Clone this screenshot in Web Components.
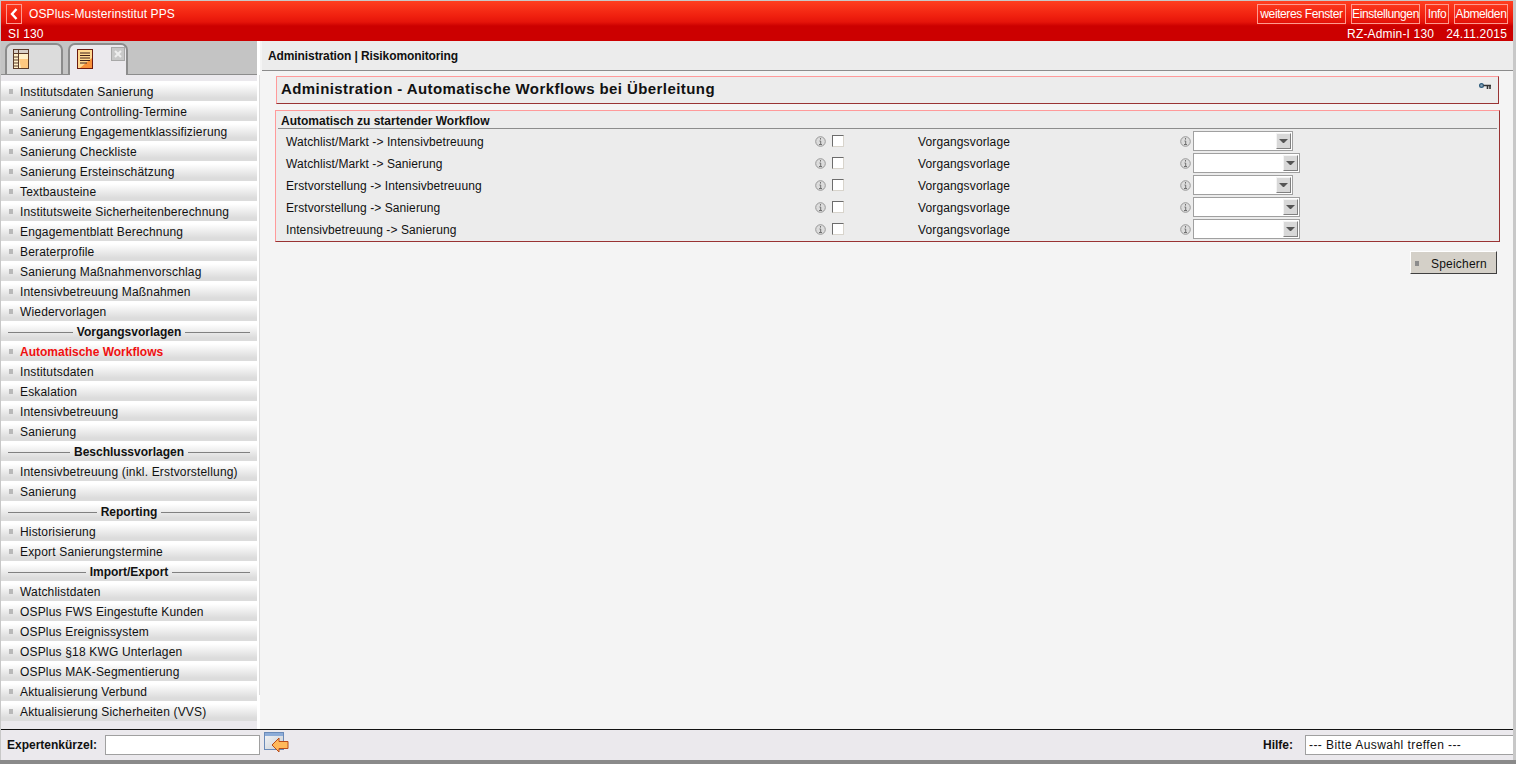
<!DOCTYPE html>
<html lang="de">
<head>
<meta charset="utf-8">
<title>OSPlus</title>
<style>
    html, body { margin: 0; height: 100%; overflow: hidden; background: #c8c8c8; }
    body { font: 12px "Liberation Sans", Arial, sans-serif; letter-spacing: 0.17px; color: #111; }
</style>
</head>
<body>
<os-app>
    <os-header slot="header"></os-header>
    <os-sidebar slot="sidebar">
        <os-nav-item>Institutsdaten Sanierung</os-nav-item>
        <os-nav-item>Sanierung Controlling-Termine</os-nav-item>
        <os-nav-item>Sanierung Engagementklassifizierung</os-nav-item>
        <os-nav-item>Sanierung Checkliste</os-nav-item>
        <os-nav-item>Sanierung Ersteinschätzung</os-nav-item>
        <os-nav-item>Textbausteine</os-nav-item>
        <os-nav-item>Institutsweite Sicherheitenberechnung</os-nav-item>
        <os-nav-item>Engagementblatt Berechnung</os-nav-item>
        <os-nav-item>Beraterprofile</os-nav-item>
        <os-nav-item>Sanierung Maßnahmenvorschlag</os-nav-item>
        <os-nav-item>Intensivbetreuung Maßnahmen</os-nav-item>
        <os-nav-item>Wiedervorlagen</os-nav-item>
        <os-nav-heading>Vorgangsvorlagen</os-nav-heading>
        <os-nav-item active>Automatische Workflows</os-nav-item>
        <os-nav-item>Institutsdaten</os-nav-item>
        <os-nav-item>Eskalation</os-nav-item>
        <os-nav-item>Intensivbetreuung</os-nav-item>
        <os-nav-item>Sanierung</os-nav-item>
        <os-nav-heading>Beschlussvorlagen</os-nav-heading>
        <os-nav-item>Intensivbetreuung (inkl. Erstvorstellung)</os-nav-item>
        <os-nav-item>Sanierung</os-nav-item>
        <os-nav-heading>Reporting</os-nav-heading>
        <os-nav-item>Historisierung</os-nav-item>
        <os-nav-item>Export Sanierungstermine</os-nav-item>
        <os-nav-heading>Import/Export</os-nav-heading>
        <os-nav-item>Watchlistdaten</os-nav-item>
        <os-nav-item>OSPlus FWS Eingestufte Kunden</os-nav-item>
        <os-nav-item>OSPlus Ereignissystem</os-nav-item>
        <os-nav-item>OSPlus §18 KWG Unterlagen</os-nav-item>
        <os-nav-item>OSPlus MAK-Segmentierung</os-nav-item>
        <os-nav-item>Aktualisierung Verbund</os-nav-item>
        <os-nav-item>Aktualisierung Sicherheiten (VVS)</os-nav-item>
    </os-sidebar>
    <os-main slot="main">
        <os-workflow-row label="Watchlist/Markt -> Intensivbetreuung"></os-workflow-row>
        <os-workflow-row label="Watchlist/Markt -> Sanierung" wide></os-workflow-row>
        <os-workflow-row label="Erstvorstellung -> Intensivbetreuung"></os-workflow-row>
        <os-workflow-row label="Erstvorstellung -> Sanierung" wide></os-workflow-row>
        <os-workflow-row label="Intensivbetreuung -> Sanierung" wide></os-workflow-row>
    </os-main>
    <os-footer slot="footer"></os-footer>
</os-app>

<script>
class OsApp extends HTMLElement {
    constructor() {
        super();
        this.attachShadow({ mode: 'open' });
        this.shadowRoot.innerHTML = `
            <style>
                :host {
                    display: grid;
                    grid-template-columns: 261px 1fr;
                    grid-template-rows: 40px 1fr 31px;
                    box-sizing: border-box;
                    height: 764px;
                    padding: 1px 3px 4px 1px;
                    background: #c8c8c8;
                    box-shadow: inset 0 -4px 0 #8a8a8a;
                }
                .header, .footer { grid-column: 1 / 3; }
            </style>
            <div class="header"><slot name="header"></slot></div>
            <slot name="sidebar"></slot>
            <slot name="main"></slot>
            <div class="footer"><slot name="footer"></slot></div>
        `;
    }
}

class OsHeader extends HTMLElement {
    constructor() {
        super();
        this.attachShadow({ mode: 'open' });
        this.shadowRoot.innerHTML = `
            <style>
                :host { display: block; color: #fff; height: 40px; }
                .top {
                    display: flex;
                    align-items: center;
                    height: 25px;
                    padding: 1px 5px 0 5px;
                    box-sizing: border-box;
                    background: linear-gradient(#ff3f20, #f0200f 60%, #e5140a 84%, #cc0000);
                }
                .back {
                    box-sizing: border-box;
                    display: flex;
                    align-items: center;
                    justify-content: center;
                    width: 16px;
                    height: 20px;
                    margin-right: 7px;
                    border: 1px solid #ff9a8f;
                }
                .title { flex: 1; letter-spacing: 0.1px; }
                button {
                    box-sizing: border-box;
                    font: inherit;
                    letter-spacing: -0.4px;
                    color: #fff;
                    background: transparent;
                    border: 1px solid #ff9a8f;
                    height: 20px;
                    padding: 0;
                    margin-left: 5px;
                }
                .bottom {
                    display: flex;
                    justify-content: space-between;
                    align-items: center;
                    height: 15px;
                    padding: 0 6px 0 7px;
                    background: #cc0000;
                }
                .date { margin-left: 12px; }
            </style>
            <div class="top">
                <span class="back">
                    <svg width="8" height="12" viewBox="0 0 8 12"><path d="M6.5 1 L2 6 L6.5 11" fill="none" stroke="#fff" stroke-width="2.4"/></svg>
                </span>
                <span class="title">OSPlus-Musterinstitut PPS</span>
                <button style="width:89px">weiteres Fenster</button>
                <button style="width:69px">Einstellungen</button>
                <button style="width:24px">Info</button>
                <button style="width:54px">Abmelden</button>
            </div>
            <div class="bottom">
                <span>SI 130</span>
                <span>RZ-Admin-I 130<span class="date">24.11.2015</span></span>
            </div>
        `;
    }
}

class OsSidebar extends HTMLElement {
    constructor() {
        super();
        this.attachShadow({ mode: 'open' });
        this.shadowRoot.innerHTML = `
            <style>
                :host {
                    display: block;
                    background:
                        linear-gradient(#dcdcdc, #dcdcdc) 258px 34px / 1px 620px no-repeat,
                        linear-gradient(90deg, #ebe9ed 256px, #fff 256px, #fff 259px, #f4f4f4 259px);
                    min-height: 0;
                    overflow: hidden;
                }
                .tabs {
                    display: flex;
                    align-items: flex-end;
                    gap: 5px;
                    box-sizing: border-box;
                    width: 256px;
                    height: 34px;
                    padding-left: 4px;
                    background: #c4c4c4;
                    border-bottom: 1px solid #8c8c8c;
                }
                .tab {
                    box-sizing: border-box;
                    position: relative;
                    height: 32px;
                    margin-bottom: -1px;
                    padding: 4px 0 0 6px;
                    border: 2px solid #8c8c8c;
                    border-bottom: 0;
                    border-radius: 7px 7px 0 0;
                    background: #dcdcdc;
                }
                .one { width: 58px; border-bottom: 1px solid #8c8c8c; }
                .two { width: 60px; padding-left: 7px; background: #ebe9ed; }
                .close {
                    position: absolute;
                    top: 2px;
                    right: 1px;
                    box-sizing: border-box;
                    width: 14px;
                    height: 14px;
                    background: #c8c8c8;
                    border: 1px solid #a8a8a8;
                }
                .list { width: 256px; padding-top: 6px; }
            </style>
            <div class="tabs">
                <div class="tab one">
                    <svg width="16" height="20" viewBox="0 0 16 20">
                        <rect x="0.5" y="0.5" width="15" height="19" fill="#fff0c8" stroke="#5b3a28"/>
                        <path d="M1 1h14v3H1z" fill="#d8d0c8"/>
                        <path d="M6 10h9v9H8z" fill="#ffc880"/>
                        <path d="M5.5 1v18M1 4.5h14M1 8h4.5M1 11h4.5M1 14h4.5M1 17h4.5" stroke="#5b3a28" fill="none"/>
                    </svg>
                </div>
                <div class="tab two">
                    <svg width="16" height="20" viewBox="0 0 16 20">
                        <rect x="0.5" y="0.5" width="15" height="19" fill="#ffd890" stroke="#6b1a10"/>
                        <path d="M15 9v10H3z" fill="#f89038"/>
                        <path d="M3 4h10M3 6.5h10M3 9h10M3 11.5h10M3 14h7" stroke="#402018" fill="none"/>
                    </svg>
                    <span class="close">
                        <svg width="12" height="12" viewBox="0 0 12 12" style="display:block"><path d="M3 3l6 6M9 3l-6 6" stroke="#eee" stroke-width="2"/></svg>
                    </span>
                </div>
            </div>
            <div class="list"><slot></slot></div>
        `;
    }
}

class OsNavItem extends HTMLElement {
    constructor() {
        super();
        this.attachShadow({ mode: 'open' });
        this.shadowRoot.innerHTML = `
            <style>
                :host {
                    display: flex;
                    align-items: center;
                    box-sizing: border-box;
                    height: 20px;
                    padding: 1px 0 0 8px;
                    background: linear-gradient(#fff 0, #fff 3px, #dcdcdc 17px);
                    white-space: nowrap;
                }
                :host([active]) { color: #f01010; font-weight: bold; letter-spacing: 0; }
                i { width: 4px; height: 5px; margin-right: 7px; background: #b8b8b8; }
            </style>
            <i></i><slot></slot>
        `;
    }
}

class OsNavHeading extends HTMLElement {
    constructor() {
        super();
        this.attachShadow({ mode: 'open' });
        this.shadowRoot.innerHTML = `
            <style>
                :host {
                    display: flex;
                    align-items: center;
                    gap: 4px;
                    box-sizing: border-box;
                    height: 20px;
                    padding: 2px 7px 0;
                    font-weight: bold;
                    letter-spacing: 0;
                    background: linear-gradient(#fff 0, #fff 3px, #dcdcdc 17px);
                    white-space: nowrap;
                }
                i { flex: 1; height: 1px; background: #808080; }
            </style>
            <i></i><slot></slot><i></i>
        `;
    }
}

class OsInfo extends HTMLElement {
    constructor() {
        super();
        this.attachShadow({ mode: 'open' });
        this.shadowRoot.innerHTML = `
            <style>:host { display: inline-block; width: 11px; height: 11px; } svg { display: block; }</style>
            <svg width="11" height="11" viewBox="0 0 11 11">
                <circle cx="5.5" cy="5.5" r="4.8" fill="#dcdcdc" stroke="#989898"/>
                <path d="M5.5 2v1.6M4.5 5h1.2v3.4M4 8.5h3" stroke="#707070" fill="none"/>
            </svg>
        `;
    }
}

class OsSelect extends HTMLElement {
    constructor() {
        super();
        this.attachShadow({ mode: 'open' });
        this.shadowRoot.innerHTML = `
            <style>
                :host {
                    display: flex;
                    justify-content: flex-end;
                    align-items: center;
                    box-sizing: border-box;
                    width: 100px;
                    height: 20px;
                    padding-right: 1px;
                    background: #fff;
                    border: 1px solid #a0a0a0;
                }
                :host([wide]) { width: 107px; }
                .arrow {
                    box-sizing: border-box;
                    display: flex;
                    align-items: center;
                    justify-content: center;
                    width: 15px;
                    height: 16px;
                    background: #d8d8d8;
                    border: 1px solid;
                    border-color: #f4f4f4 #808080 #808080 #f4f4f4;
                }
            </style>
            <span class="arrow">
                <svg width="9" height="6" viewBox="0 0 9 6"><path d="M0 1h9L5 5H4z" fill="#555"/></svg>
            </span>
        `;
    }
}

class OsWorkflowRow extends HTMLElement {
    constructor() {
        super();
        this.attachShadow({ mode: 'open' });
        this.shadowRoot.innerHTML = `
            <style>
                :host {
                    display: grid;
                    grid-template-columns: 529px 17px 86px 262px 13px auto;
                    align-items: center;
                    height: 22px;
                    letter-spacing: 0.13px;
                    white-space: nowrap;
                }
                .text { padding-top: 1px; }
                .label { letter-spacing: 0.09px; }
                .check {
                    box-sizing: border-box;
                    width: 12px;
                    height: 12px;
                    background: #fff;
                    border: 1px solid;
                    border-color: #6c6c6c #d8d4cc #d8d4cc #6c6c6c;
                }
            </style>
            <span class="text label"></span>
            <os-info></os-info>
            <span class="check"></span>
            <span class="text">Vorgangsvorlage</span>
            <os-info></os-info>
            <os-select></os-select>
        `;
        this.shadowRoot.querySelector('.label').textContent = this.getAttribute('label');
        if (this.hasAttribute('wide')) {
            this.shadowRoot.querySelector('os-select').setAttribute('wide', '');
        }
    }
}

class OsMain extends HTMLElement {
    constructor() {
        super();
        this.attachShadow({ mode: 'open' });
        this.shadowRoot.innerHTML = `
            <style>
                :host { display: block; background: #f4f4f4; min-height: 0; }
                .crumb {
                    box-sizing: border-box;
                    height: 30px;
                    padding: 8px 0 0 6px;
                    font-weight: bold;
                    letter-spacing: -0.1px;
                    background: #ececec;
                    border-bottom: 1px solid #8c8c8c;
                }
                .content { padding: 5px 14px 0 14px; }
                .title {
                    display: flex;
                    justify-content: space-between;
                    box-sizing: border-box;
                    height: 28px;
                    padding: 3px 7px 0 4px;
                    font-size: 15px;
                    font-weight: bold;
                    letter-spacing: 0.42px;
                    background: #ececec;
                    border: 1px solid;
                    border-color: #ff9a9a #993333 #993333 #ff9a9a;
                }
                .title svg { margin-top: 3px; }
                .section {
                    margin: 6px -1px 0 -1px;
                    box-sizing: border-box;
                    height: 132px;
                    background: #ececec;
                    border: 1px solid;
                    border-color: #ff9a9a #993333 #993333 #ff9a9a;
                }
                .section-title {
                    height: 18px;
                    margin: 0 2px 0 2px;
                    padding: 3px 0 0 3px;
                    box-sizing: border-box;
                    font-weight: bold;
                    letter-spacing: 0;
                    border-bottom: 1px solid #8c8c8c;
                }
                .rows { padding: 1px 0 0 10px; }
                .actions { display: flex; justify-content: flex-end; padding: 9px 2px 0 0; }
                button {
                    display: flex;
                    align-items: center;
                    box-sizing: border-box;
                    width: 87px;
                    height: 23px;
                    padding: 2px 0 0 4px;
                    font: inherit;
                    letter-spacing: 0.2px;
                    color: #111;
                    background: #d4d0c8;
                    border: 1px solid;
                    border-color: #fff #404040 #404040 #fff;
                }
                button i { width: 4px; height: 5px; margin-right: 12px; background: #8c8c8c; }
            </style>
            <div class="crumb">Administration | Risikomonitoring</div>
            <div class="content">
                <div class="title">
                    <span>Administration - Automatische Workflows bei Überleitung</span>
                    <svg width="12" height="7" viewBox="0 0 12 7">
                        <circle cx="2.5" cy="2.5" r="1.9" fill="#8aa4b8" stroke="#2c5a7a" stroke-width="1.2"/>
                        <path d="M4.5 2.5H12M8.5 2.5V6M11 2.5V6" stroke="#333" stroke-width="1.6" fill="none"/>
                    </svg>
                </div>
                <div class="section">
                    <div class="section-title">Automatisch zu startender Workflow</div>
                    <div class="rows"><slot></slot></div>
                </div>
                <div class="actions"><button><i></i>Speichern</button></div>
            </div>
        `;
    }
}

class OsFooter extends HTMLElement {
    constructor() {
        super();
        this.attachShadow({ mode: 'open' });
        this.shadowRoot.innerHTML = `
            <style>
                :host {
                    display: flex;
                    align-items: center;
                    box-sizing: border-box;
                    height: 31px;
                    padding: 0 0 0 6px;
                    background: #ebe9ed;
                    border-top: 1px solid #111;
                }
                b { letter-spacing: 0; }
                .field {
                    box-sizing: border-box;
                    height: 20px;
                    margin-left: 8px;
                    background: #fff;
                    border: 1px solid #a0a0a0;
                }
                .code { width: 155px; }
                .go { align-self: flex-start; margin: 2px 0 0 4px; }
                .spacer { flex: 1; }
                .help {
                    width: 208px;
                    margin-left: 12px;
                    padding: 2px 0 0 3px;
                    letter-spacing: 0.43px;
                    border-right: 0;
                }
            </style>
            <b>Expertenkürzel:</b>
            <span class="field code"></span>
            <svg class="go" width="25" height="21" viewBox="0 0 25 21">
                <defs>
                    <linearGradient id="win" x1="0" y1="0" x2="1" y2="1">
                        <stop offset="0" stop-color="#f4f6fa"/>
                        <stop offset="1" stop-color="#c8ccd0"/>
                    </linearGradient>
                </defs>
                <rect x="0.5" y="0.5" width="19" height="17" fill="url(#win)" stroke="#6a8ab8"/>
                <rect x="1" y="1" width="18" height="3" fill="#8cacd8"/>
                <path d="M24 9.5h-9V6L8 13l7 7v-3.5h9z" fill="#ffb85a" stroke="#b84a18"/>
            </svg>
            <span class="spacer"></span>
            <b>Hilfe:</b>
            <span class="field help">--- Bitte Auswahl treffen ---</span>
        `;
    }
}

customElements.define('os-app', OsApp);
customElements.define('os-header', OsHeader);
customElements.define('os-sidebar', OsSidebar);
customElements.define('os-nav-item', OsNavItem);
customElements.define('os-nav-heading', OsNavHeading);
customElements.define('os-info', OsInfo);
customElements.define('os-select', OsSelect);
customElements.define('os-workflow-row', OsWorkflowRow);
customElements.define('os-main', OsMain);
customElements.define('os-footer', OsFooter);
</script>
</body>
</html>
